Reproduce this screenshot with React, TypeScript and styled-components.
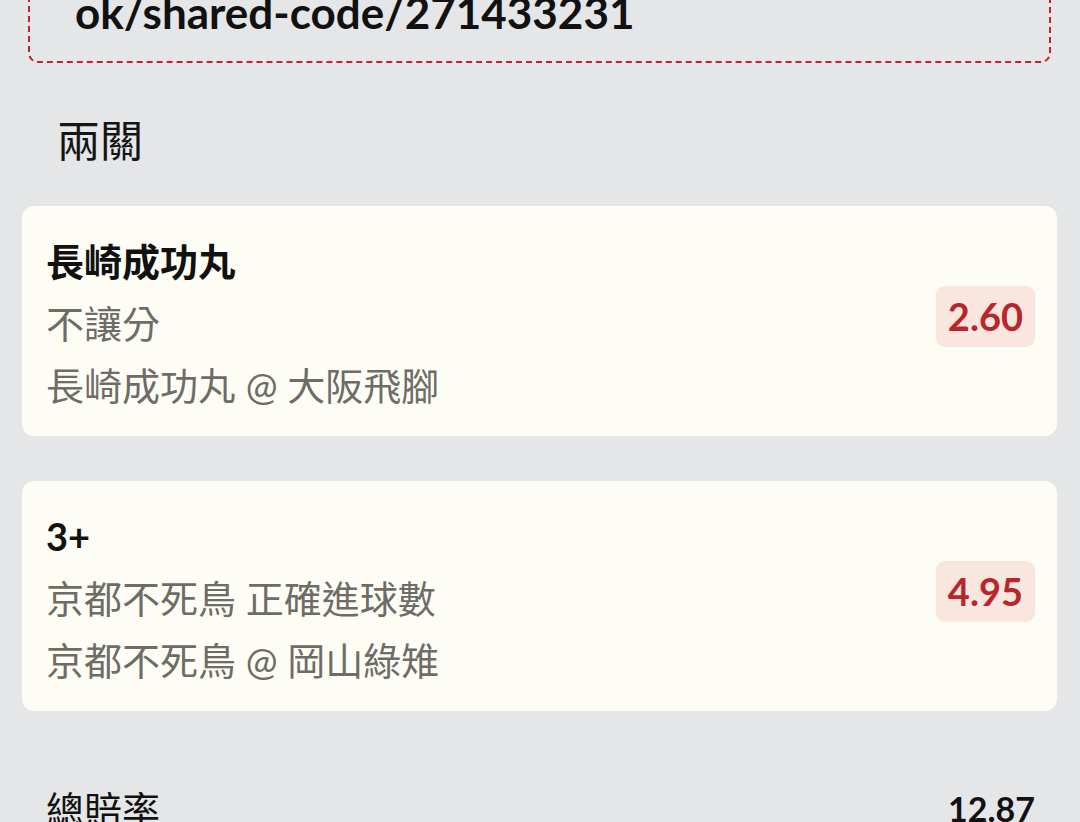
import styled, { createGlobalStyle } from 'styled-components'

const GlobalStyle = createGlobalStyle`
    html {
        overflow: hidden;
    }
    body {
        margin: 0;
        padding: 0;
        background: #e5e6e8;
        font-family: Lato, "Noto Sans CJK TC", sans-serif;
    }
`

type Leg = {
    pick: string
    market: string
    match: string
    odds: string
}

const legs: Leg[] = [
    { pick: '長崎成功丸', market: '不讓分', match: '長崎成功丸 @ 大阪飛腳', odds: '2.60' },
    { pick: '3+', market: '京都不死鳥 正確進球數', match: '京都不死鳥 @ 岡山綠雉', odds: '4.95' },
]

const App = () => {
    return (
        <Page>
            <GlobalStyle />
            <LinkBox>ok/shared-code/271433231</LinkBox>
            <Heading>兩關</Heading>
            <LegList>
                {legs.map((leg) => (
                    <LegCard key={leg.pick}>
                        <LegText>
                            <Pick>{leg.pick}</Pick>
                            <Detail>{leg.market}</Detail>
                            <Detail>{leg.match}</Detail>
                        </LegText>
                        <OddsBadge>{leg.odds}</OddsBadge>
                    </LegCard>
                ))}
            </LegList>
            <Summary>
                <span>總賠率</span>
                <TotalOdds>12.87</TotalOdds>
            </Summary>
        </Page>
    )
}

export default App

const Page = styled.div`
    padding: 1px 23px 40px 22px;
`

const LinkBox = styled.div`
    margin: -35px 6px 0 6px;
    padding: 18px 0 22px 45px;
    border: 2px dashed #c8202a;
    border-radius: 10px;
    font-size: 44px;
    font-weight: 700;
    line-height: 1.2;
    color: #111;
`

const Heading = styled.h2`
    margin: 48px 0 35px 35px;
    font-size: 43px;
    font-weight: 400;
    line-height: 60px;
    color: #151515;
`

const LegList = styled.div`
    display: flex;
    flex-direction: column;
    gap: 45px;
`

const LegCard = styled.div`
    display: flex;
    align-items: center;
    justify-content: space-between;
    height: 230px;
    box-sizing: border-box;
    padding: 0 22px 0 24px;
    background: #fdfdf5;
    border-radius: 12px;
`

const LegText = styled.div`
    display: flex;
    flex-direction: column;
    padding-top: 4px;
`

const Pick = styled.div`
    font-size: 38px;
    font-weight: 700;
    line-height: 62px;
    color: #111;
`

const Detail = styled.div`
    font-size: 38px;
    font-weight: 400;
    line-height: 62px;
    color: #6d6c66;
`

const OddsBadge = styled.div`
    margin-bottom: 9px;
    padding: 0 12px;
    height: 61px;
    display: flex;
    align-items: center;
    background: #f8e6df;
    border-radius: 9px;
    font-size: 38px;
    font-weight: 700;
    color: #b8262b;
`

const Summary = styled.div`
    display: flex;
    justify-content: space-between;
    align-items: center;
    margin-top: 68px;
    padding: 0 22px 0 24px;
    font-size: 38px;
    line-height: 60px;
    color: #111;
`

const TotalOdds = styled.span`
    font-size: 34px;
    font-weight: 700;
`
